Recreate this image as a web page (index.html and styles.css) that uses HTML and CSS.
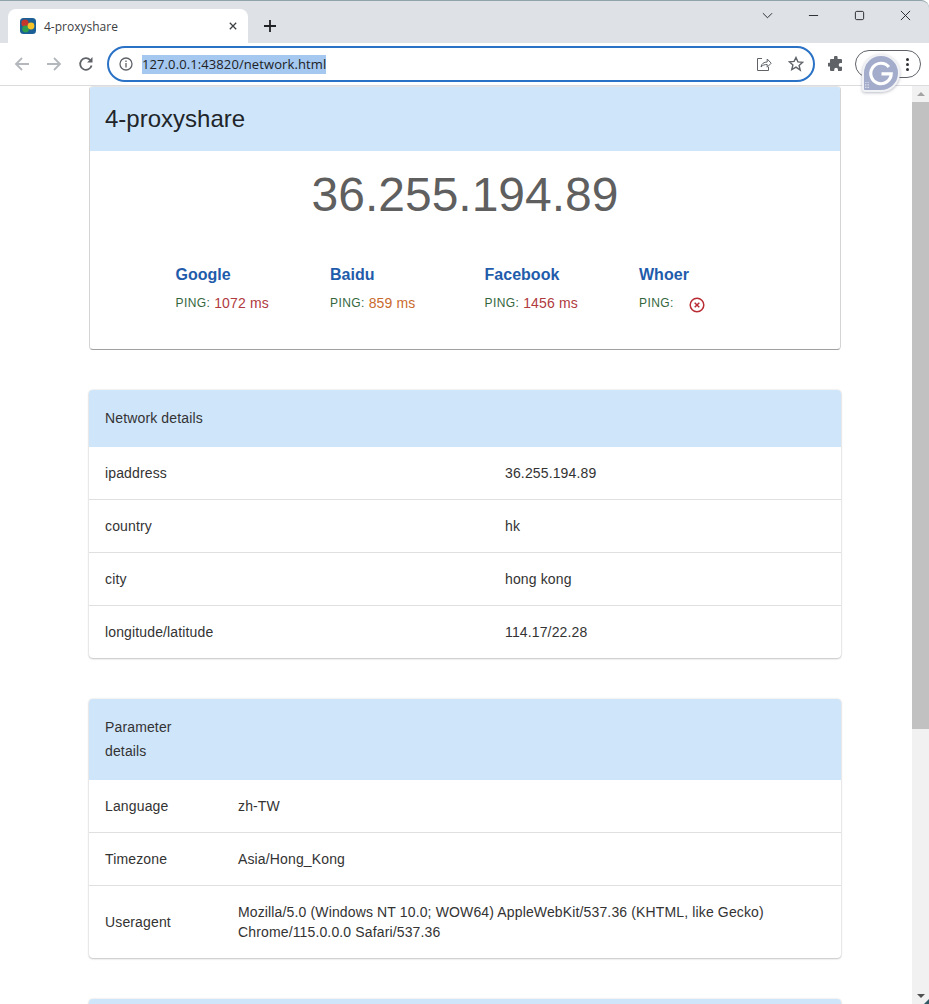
FILE: index.html
```html
<!DOCTYPE html>
<html>
    <head>
        <meta charset="utf-8">
        <title>4-proxyshare</title>
        <link rel="stylesheet" href="styles.css">
    </head>
    <body>
        <div class="tabstrip">
            <div class="tab">
                <svg class="favicon" viewBox="0 0 16 16">
                    <rect width="16" height="16" rx="3.5" fill="#1a5f96"/>
                    <circle cx="5" cy="5.2" r="3.6" fill="#c5362c"/>
                    <circle cx="5.6" cy="11" r="3.4" fill="#2f9e4f"/>
                    <circle cx="11" cy="8" r="3.4" fill="#f5c228"/>
                </svg>
                <span class="tab-title">4-proxyshare</span>
                <svg class="tab-close" viewBox="0 0 10 10"><path d="M1 1l8 8M9 1l-8 8"/></svg>
            </div>
            <svg class="newtab" viewBox="0 0 12 12"><path d="M6 0v12M0 6h12"/></svg>
            <div class="window-btns">
                <svg class="win-icon" viewBox="0 0 12 12"><path d="M1 3.5l5 5 5-5"/></svg>
                <svg class="win-icon" viewBox="0 0 12 12"><path d="M1 6h10"/></svg>
                <svg class="win-icon" viewBox="0 0 12 12"><rect x="1.5" y="1.5" width="9" height="9" rx="1.5"/></svg>
                <svg class="win-icon" viewBox="0 0 12 12"><path d="M1 1l10 10M11 1l-10 10"/></svg>
            </div>
        </div>

        <div class="toolbar">
            <svg class="nav-icon dim" viewBox="0 0 16 16"><path d="M15 8H2M8 2L2 8l6 6"/></svg>
            <svg class="nav-icon dim" viewBox="0 0 16 16"><path d="M1 8h13M8 2l6 6-6 6"/></svg>
            <svg class="nav-icon" viewBox="0 0 16 16"><path d="M13.6 9.5A5.8 5.8 0 1 1 12.2 4"/><path class="fill" d="M14.5 1v5.4H9.1z"/></svg>
            <div class="omnibox">
                <svg class="info-icon" viewBox="0 0 14 14">
                    <circle cx="7" cy="7" r="6"/>
                    <path d="M7 6v4.4M7 3.4v1.6"/>
                </svg>
                <span class="url">127.0.0.1:43820/network.html</span>
                <svg class="share-icon" viewBox="0 0 16 16"><path d="M6 2.5H1.5v12h11V11"/><path d="M5 11c.4-3.4 3-5 6.2-5V3l4 4.2-4 4V8.500c-2.600 0-4.700.7-6.200 2.500z"/></svg>
                <svg class="star-icon" viewBox="0 0 16 16"><path d="M8 1.500l1.900 4.400 4.800.4-3.600 3.100 1.100 4.700L8 11.100l-4.200 2.500 1.100-4.700-3.600-3.100 4.800-.4z"/></svg>
            </div>
            <svg class="puzzle" viewBox="0 0 16 16"><path d="M6 1.500a1.800 1.800 0 0 1 3.600 0V3H13a1 1 0 0 1 1 1v3h-1.400a1.900 1.900 0 0 0 0 3.800H14V14a1 1 0 0 1-1 1h-3v-1.300a1.900 1.900 0 0 0-3.800 0V15H3a1 1 0 0 1-1-1v-3.400H.9a1.900 1.900 0 0 1 0-3.800H2V4a1 1 0 0 1 1-1h3z"/></svg>
            <div class="profile-pill">
                <span class="menu-dots"><i></i><i></i><i></i></span>
            </div>
            <div class="g-badge">
                <svg class="g-mark" viewBox="0 0 28 28"><path d="M22.500 7.500A11 11 0 1 0 25 15H14.500"/></svg>
                <svg class="g-grid" viewBox="0 0 5 8">
                    <path d="M0 0h1v1H0zM2 0h1v1H2zM4 0h1v1H4zM0 2h1v1H0zM2 2h1v1H2zM4 2h1v1H4zM0 4h1v1H0zM2 4h1v1H2zM4 4h1v1H4zM0 6h1v1H0zM2 6h1v1H2zM4 6h1v1H4z"/>
                </svg>
            </div>
        </div>

        <div class="viewport">
            <main class="page">
                <section class="card hero">
                    <h1 class="hero-title">4-proxyshare</h1>
                    <div class="hero-ip">36.255.194.89</div>
                    <div class="sites">
                        <div class="site">
                            <a class="site-name">Google</a>
                            <p class="ping">PING: <span class="slow">1072 ms</span></p>
                        </div>
                        <div class="site">
                            <a class="site-name">Baidu</a>
                            <p class="ping">PING: <span class="medium">859 ms</span></p>
                        </div>
                        <div class="site">
                            <a class="site-name">Facebook</a>
                            <p class="ping">PING: <span class="slow">1456 ms</span></p>
                        </div>
                        <div class="site">
                            <a class="site-name">Whoer</a>
                            <p class="ping">PING:
                                <svg class="fail-icon" viewBox="0 0 16 16">
                                    <circle cx="8" cy="8" r="6.800"/>
                                    <path d="M5.700 5.700l4.600 4.600M10.300 5.700l-4.600 4.600"/>
                                </svg>
                            </p>
                        </div>
                    </div>
                </section>

                <section class="card panel">
                    <div class="panel-head">Network details</div>
                    <div class="row net-row"><span>ipaddress</span><span>36.255.194.89</span></div>
                    <div class="row net-row"><span>country</span><span>hk</span></div>
                    <div class="row net-row"><span>city</span><span>hong kong</span></div>
                    <div class="row net-row"><span>longitude/latitude</span><span>114.17/22.28</span></div>
                </section>

                <section class="card panel">
                    <div class="panel-head two-line">Parameter<br>details</div>
                    <div class="row param-row"><span>Language</span><span>zh-TW</span></div>
                    <div class="row param-row"><span>Timezone</span><span>Asia/Hong_Kong</span></div>
                    <div class="row param-row tall"><span>Useragent</span><span>Mozilla/5.0 (Windows NT 10.0; WOW64) AppleWebKit/537.36 (KHTML, like Gecko) Chrome/115.0.0.0 Safari/537.36</span></div>
                </section>

                <section class="card panel">
                    <div class="panel-head">&nbsp;</div>
                </section>
            </main>
            <div class="scrollbar">
                <span class="arrow up"></span>
                <div class="thumb"></div>
                <span class="arrow down"></span>
            </div>
        </div>
        <span class="window-corner"></span>
    </body>
</html>
```

FILE: styles.css
```css
* {
    box-sizing: border-box;
}

html, body {
    height: 100%;
}

body {
    margin: 0;
    overflow: hidden;
    display: flex;
    flex-direction: column;
    background: #fff;
    color: #333;
    font-family: 'Liberation Sans', Arial, sans-serif;
    font-size: 14px;
    letter-spacing: 0.14px;
}

/* browser chrome */

.tabstrip {
    height: 43px;
    flex: none;
    display: flex;
    align-items: flex-end;
    padding-left: 8px;
    background: #dee1e6;
    border-top: 1px solid #8fa3a8;
    border-top-right-radius: 8px;
    letter-spacing: 0;
}

.tab {
    width: 240px;
    height: 34px;
    display: flex;
    align-items: center;
    padding: 0 12px;
    background: #fff;
    border-radius: 8px 8px 0 0;
}

.favicon {
    width: 16px;
    height: 16px;
    flex: none;
}

.tab-title {
    flex: 1;
    margin-left: 8px;
    font-family: 'Open Sans', 'Noto Sans', sans-serif;
    font-size: 12px;
    color: #3c4043;
}

.tab-close {
    width: 8px;
    height: 8px;
    margin-right: -1px;
    fill: none;
    stroke: #3c4043;
    stroke-width: 1.6;
}

.newtab {
    width: 12px;
    height: 12px;
    margin: 0 0 11px 16px;
    fill: none;
    stroke: #202124;
    stroke-width: 1.800;
}

.window-btns {
    margin-left: auto;
    align-self: flex-start;
    display: flex;
    gap: 35px;
    padding: 9px 18px 0 0;
}

.win-icon {
    width: 11px;
    height: 11px;
    fill: none;
    stroke: #202124;
    stroke-width: 1;
}

.toolbar {
    position: relative;
    height: 43px;
    flex: none;
    display: flex;
    align-items: center;
    padding-left: 14px;
    background: #fff;
    border-bottom: 1px solid #dadce0;
    letter-spacing: 0;
}

.nav-icon {
    width: 16px;
    height: 16px;
    margin-right: 16px;
    fill: none;
    stroke: #5f6368;
    stroke-width: 1.800;
}

.nav-icon.dim {
    stroke: #b4b7bb;
}

.nav-icon .fill {
    fill: #5f6368;
    stroke: none;
}

.omnibox {
    width: 708px;
    height: 36px;
    margin-left: -3px;
    display: flex;
    align-items: center;
    padding: 0 9px 0 10px;
    border: 2px solid #2a72c6;
    border-radius: 18px;
}

.info-icon {
    width: 14px;
    height: 14px;
    fill: none;
    stroke: #5f6368;
    stroke-width: 1.300;
}

.url {
    margin-left: 9px;
    padding: 1px 0;
    background: #a4c8f0;
    color: #202124;
    font-family: 'Open Sans', 'Noto Sans', sans-serif;
    font-size: 13px;
    line-height: 17px;
    letter-spacing: 0.1px;
}

.share-icon {
    width: 16px;
    height: 16px;
    margin-left: auto;
    fill: none;
    stroke: #5f6368;
    stroke-width: 1;
}

.star-icon {
    width: 16px;
    height: 16px;
    margin-left: 16px;
    fill: none;
    stroke: #5f6368;
    stroke-width: 1.400;
}

.puzzle {
    width: 16px;
    height: 16px;
    margin-left: 13px;
    fill: #5f6368;
}

.profile-pill {
    width: 66px;
    height: 28px;
    margin-left: 11px;
    display: flex;
    align-items: center;
    justify-content: flex-end;
    padding-right: 11px;
    border: 1px solid #5f6368;
    border-radius: 14px;
}

.menu-dots {
    display: flex;
    flex-direction: column;
    gap: 2px;
}

.menu-dots i {
    width: 3px;
    height: 3px;
    border-radius: 50%;
    background: #303134;
}

.g-badge {
    position: absolute;
    left: 862px;
    top: 11px;
    width: 38px;
    height: 38px;
    display: flex;
    align-items: center;
    justify-content: center;
    background: #a3acca;
    border: 2px solid #f1f2f6;
    border-radius: 50% 50% 50% 3px;
    box-shadow: 0 1px 3px rgba(60, 64, 90, 0.35);
    z-index: 2;
}

.g-mark {
    width: 26px;
    height: 26px;
    fill: none;
    stroke: #fff;
    stroke-width: 3.400;
}

.g-grid {
    position: absolute;
    left: 1px;
    bottom: 1px;
    width: 4px;
    height: 7px;
    fill: #fff;
    opacity: 0.75;
}

.window-corner {
    position: fixed;
    right: 0;
    bottom: 0;
    border-left: 5px solid transparent;
    border-bottom: 5px solid #2f5a66;
}

/* page */

.viewport {
    flex: 1;
    min-height: 0;
    display: flex;
}

.page {
    flex: 1;
    min-width: 0;
    overflow: hidden;
    padding: 0 71px 0 89px;
}

.scrollbar {
    width: 17px;
    flex: none;
    display: flex;
    flex-direction: column;
    align-items: center;
    background: #f1f1f1;
}

.arrow {
    flex: none;
    margin: 6px 0;
    border-left: 4px solid transparent;
    border-right: 4px solid transparent;
}

.arrow.up {
    border-bottom: 4px solid #a3a3a3;
}

.arrow.down {
    margin-top: auto;
    border-top: 4px solid #505050;
}

.thumb {
    width: 100%;
    height: 627px;
    background: #c1c1c1;
}

.card {
    background: #fff;
    border-radius: 4px;
    overflow: hidden;
}

.hero {
    height: 264px;
    border: 1px solid #d4d4d4;
    border-top-color: #e4e4e4;
    border-bottom-color: #a0a0a0;
    letter-spacing: 0;
}

.hero-title {
    height: 64px;
    margin: 0;
    padding: 0 15px;
    background: #cfe5fa;
    color: #212529;
    font-size: 24px;
    font-weight: 400;
    line-height: 64px;
}

.hero-ip {
    margin-top: 14px;
    text-align: center;
    font-size: 48px;
    line-height: 60px;
    color: #5f5f5f;
}

.sites {
    display: grid;
    grid-template-columns: repeat(4, 154.500px);
    margin-top: 38px;
    padding-left: 85.500px;
}

.site-name {
    display: block;
    color: #1f5cab;
    font-size: 16px;
    font-weight: 700;
    line-height: 24px;
    letter-spacing: 0.02px;
}

.ping {
    display: flex;
    align-items: center;
    gap: 4px;
    height: 20px;
    margin: 6px 0 0;
    color: #33663d;
    font-size: 12px;
    letter-spacing: 0.4px;
}

.ping span {
    font-size: 14px;
    letter-spacing: 0.14px;
}

.slow {
    color: #b03a3e;
}

.medium {
    color: #c96a2c;
}

.fail-icon {
    width: 16px;
    height: 16px;
    margin: 3px 0 0 11px;
    fill: none;
    stroke: #b92c33;
    stroke-width: 1.500;
}

.panel {
    margin-top: 40px;
    box-shadow: 0 1px 2px rgba(0, 0, 0, 0.2), 0 0 2px rgba(0, 0, 0, 0.16);
}

.panel + .panel {
    margin-top: 41px;
}

.panel-head {
    height: 57px;
    padding: 0 16px;
    background: #cfe5fa;
    line-height: 56px;
}

.panel-head.two-line {
    height: 81px;
    padding-top: 16px;
    line-height: 24px;
}

.row {
    height: 53px;
    display: grid;
    align-items: center;
    padding: 0 16px;
    border-top: 1px solid #e0e0e0;
    line-height: 20px;
}

.row:nth-child(2) {
    border-top: 0;
    height: 52px;
}

.net-row {
    grid-template-columns: 400px 1fr;
}

.param-row {
    grid-template-columns: 133px 1fr;
}

.param-row.tall {
    height: 73px;
}
```
